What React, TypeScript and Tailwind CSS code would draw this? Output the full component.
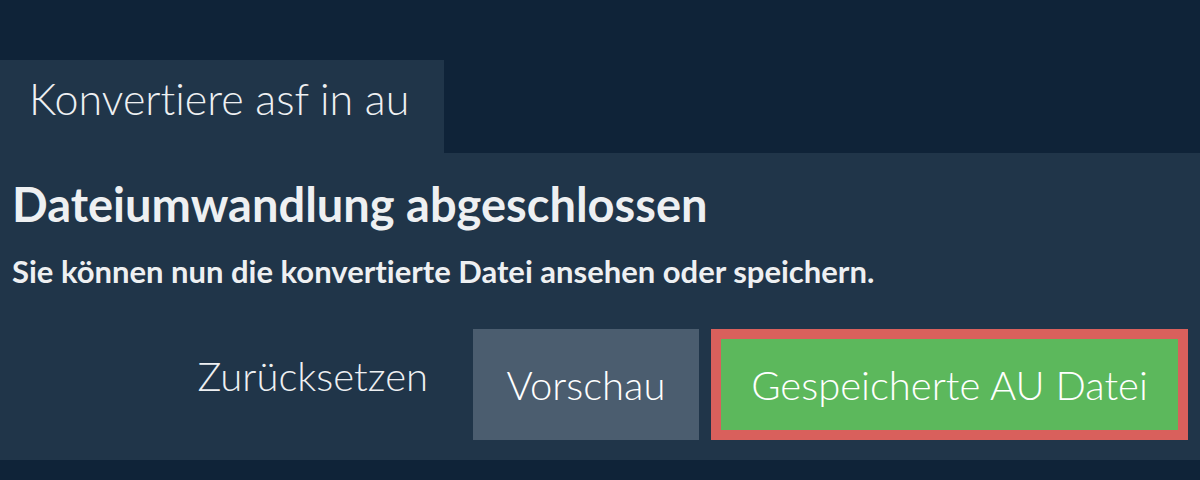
import React from "react";

export default function App() {
  return (
    <div
      className="w-[1200px] h-[480px] bg-[#0f2338] overflow-hidden [font-variant-ligatures:none]"
      style={{ fontFamily: "Lato, 'Noto Sans', sans-serif" }}
    >
      <div className="h-[60px]" />
      <div className="flex">
        <div className="w-[444px] h-[93px] bg-[#203549] pl-[29px] pt-[17px]">
          <span className="block text-[43px] font-light text-[#eef0f2] leading-none">Konvertiere asf in au</span>
        </div>
      </div>
      <div className="bg-[#203549] h-[307px] px-3 flex flex-col">
        <h1 className="text-[47px] font-bold text-[#eef0f2] leading-none mt-[28px]">Dateiumwandlung abgeschlossen</h1>
        <p className="text-[31px] font-bold text-[#eef0f2] leading-none mt-[28px]">
          Sie können nun die konvertierte Datei ansehen oder speichern.
        </p>
        <div className="flex justify-end items-start gap-3 mt-[42px]">
          <button className="h-[111px] pt-[27px] pr-[33px] pl-[12px] text-[40px] leading-none font-light text-[#eef0f2] flex items-start">
            Zurücksetzen
          </button>
          <button className="h-[111px] w-[226px] bg-[#4b5d6f] text-[40px] leading-none font-light text-white">Vorschau</button>
          <button className="h-[111px] w-[477px] bg-[#5cb85c] border-[10px] border-[#d9605c] text-[40px] leading-none font-light text-white">
            Gespeicherte AU Datei
          </button>
        </div>
      </div>
    </div>
  );
}
